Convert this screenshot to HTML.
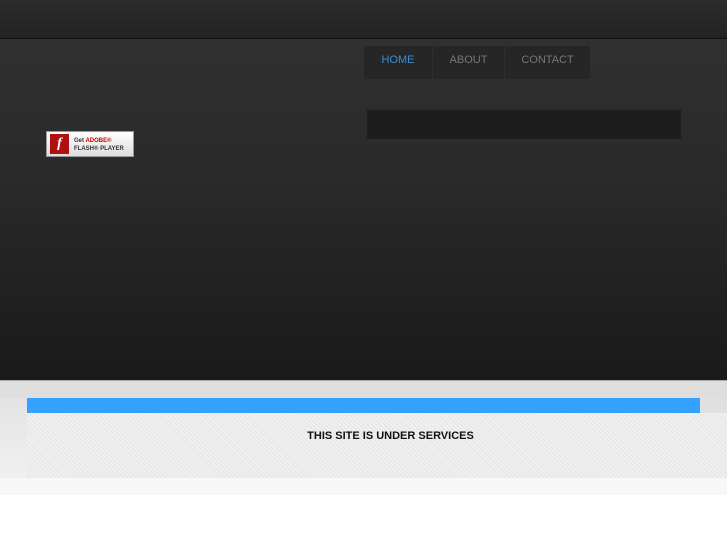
<!DOCTYPE html>
<html><head><style>
body{margin:0;width:727px;height:545px;overflow:hidden;background:#fff;font-family:"Liberation Sans",sans-serif;position:relative}
.a{position:absolute}
</style></head><body>
<div class="a" style="left:0;top:0;width:727px;height:38px;background:linear-gradient(#2c2c2c,#232323)"></div>
<div class="a" style="left:0;top:38px;width:727px;height:1px;background:#111"></div>
<div class="a" style="left:0;top:39px;width:727px;height:341px;background:linear-gradient(#303030 0%,#2a2a2a 40%,#1a1a1a 100%)"></div>
<div class="a" style="left:364px;top:46px;width:68px;height:33px;background:#262626"></div>
<div class="a" style="left:433px;top:46px;width:71px;height:33px;background:#262626"></div>
<div class="a" style="left:505px;top:46px;width:85px;height:33px;background:#262626"></div>
<div class="a" style="left:364px;top:54px;width:68px;text-align:center;font-size:11px;color:#3a8fd6">HOME</div>
<div class="a" style="left:433px;top:54px;width:71px;text-align:center;font-size:11px;color:#777">ABOUT</div>
<div class="a" style="left:505px;top:54px;width:85px;text-align:center;font-size:11px;color:#777">CONTACT</div>
<div class="a" style="left:367px;top:110px;width:314px;height:29px;background:#1d1d1d"></div>
<div class="a" style="left:46px;top:131px;width:88px;height:26px;background:linear-gradient(#fff,#ddd);border:1px solid #999;box-sizing:border-box"></div>
<div class="a" style="left:50px;top:134px;width:19px;height:20px;background:#b01010;color:#fff;font:italic bold 14px 'Liberation Serif',serif;text-align:center;line-height:20px">f</div>
<div class="a" style="left:74px;top:137px;font-size:6px;color:#333;font-weight:bold;line-height:8px">Get <span style="color:#c00">ADOBE®</span><br>FLASH® PLAYER</div>
<div class="a" style="left:0;top:380px;width:727px;height:1px;background:#aaa"></div>
<div class="a" style="left:0;top:381px;width:727px;height:17px;background:#dedede"></div>
<div class="a" style="left:0;top:398px;width:27px;height:97px;background:linear-gradient(#e3e3e3,#f3f3f3)"></div>
<div class="a" style="left:700px;top:398px;width:27px;height:15px;background:#e0e0e0"></div>
<div class="a" style="left:27px;top:398px;width:673px;height:15px;background:#33a1fd"></div>
<div class="a" style="left:27px;top:413px;width:700px;height:65px;background:repeating-linear-gradient(45deg,#f0f0f0 0,#f0f0f0 2px,#e4e4e4 2px,#e4e4e4 3px)"></div>
<div class="a" style="left:27px;top:430px;width:727px;text-align:center;font-size:11px;font-weight:bold;color:#111">THIS SITE IS UNDER SERVICES</div>
<div class="a" style="left:0;top:478px;width:727px;height:17px;background:#f7f7f7"></div>
</body></html>
